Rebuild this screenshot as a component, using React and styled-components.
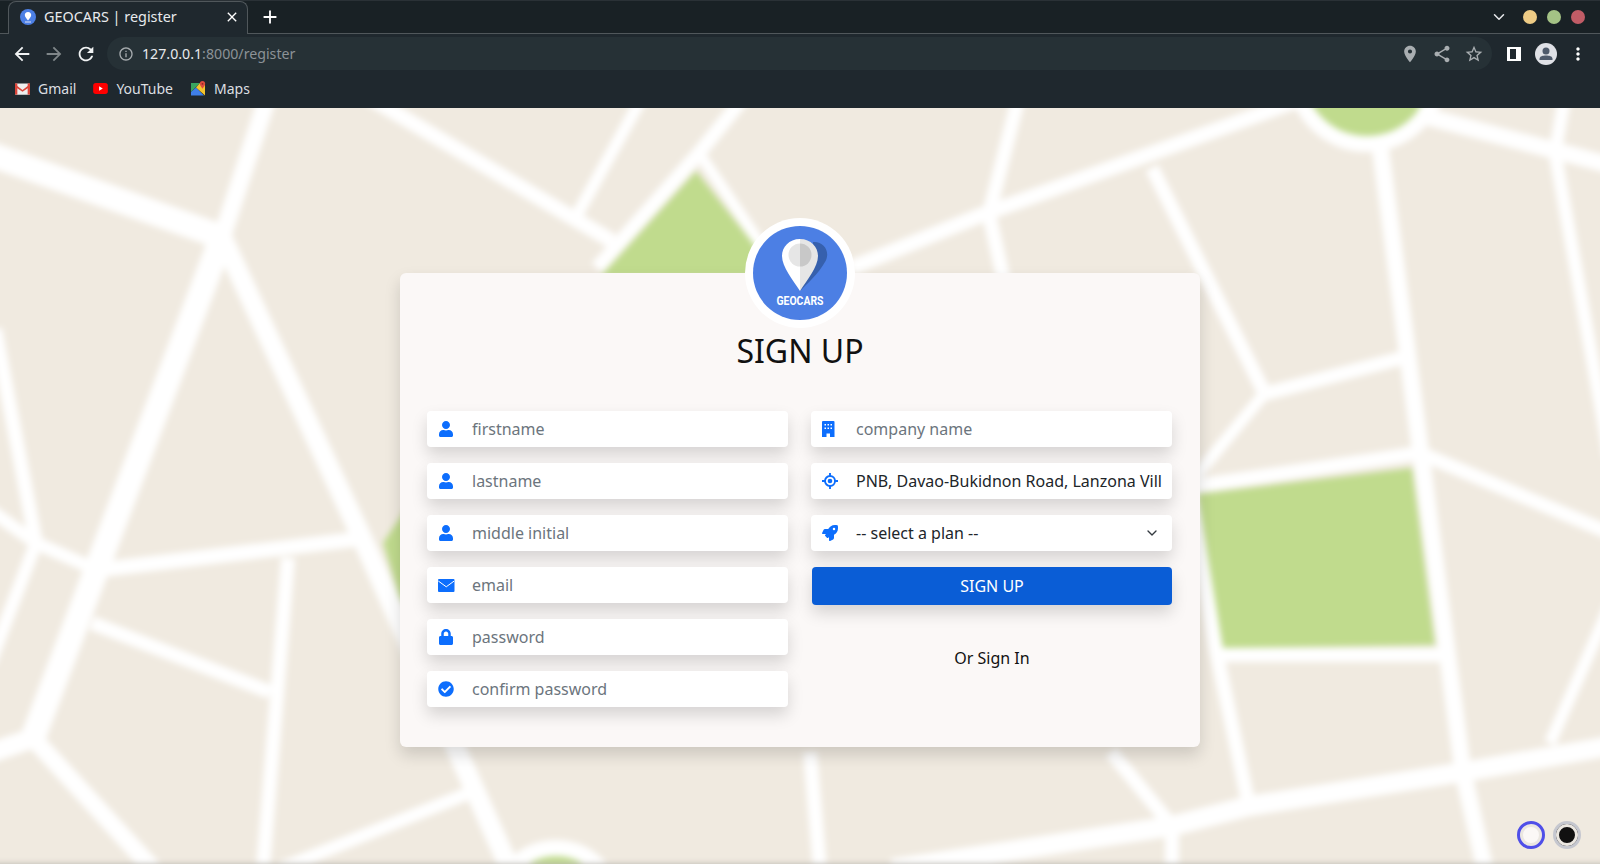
import React from 'react';
import styled, { createGlobalStyle } from 'styled-components';
import { FaUser, FaLock, FaCheckCircle, FaRocket } from 'react-icons/fa';
import {
  MdArrowBack,
  MdArrowForward,
  MdRefresh,
  MdPlace,
  MdShare,
  MdStarBorder,
  MdMoreVert,
  MdInfoOutline,
  MdClose,
  MdAdd,
} from 'react-icons/md';
import { FiChevronDown } from 'react-icons/fi';

const GlobalStyle = createGlobalStyle`
  html, body {
    margin: 0;
    padding: 0;
    height: 100%;
    overflow: hidden;
    font-family: "Noto Sans", "Open Sans", sans-serif;
  }
  * {
    box-sizing: border-box;
  }
`;

const Page = styled.div`
  width: 1600px;
  height: 864px;
  display: flex;
  flex-direction: column;
  overflow: hidden;
`;

/* browser chrome */
const Browser = styled.header`
  height: 108px;
  flex: none;
  background: #1f282e;
  color: #e8eaed;
  font-size: 14px;
`;

const TabStrip = styled.div`
  height: 34px;
  display: flex;
  align-items: flex-end;
  padding-left: 8px;
  background: #192125;
  border-top: 1px solid #2a3136;
  border-bottom: 1px solid #50575b;
`;

const Tab = styled.div`
  width: 240px;
  height: 33px;
  margin-bottom: -1px;
  display: flex;
  align-items: center;
  padding: 0 7px 2px 11px;
  background: #1f282e;
  border: 1px solid #50575b;
  border-bottom: none;
  border-radius: 8px 8px 0 0;
`;

const TabTitle = styled.span`
  flex: 1;
  margin: 0 0 2px 8px;
  font-size: 14.4px;
  white-space: nowrap;
`;

const TabAction = styled.span`
  display: flex;
  color: #fff;
  font-size: ${(p) => p.$size || 16}px;
`;

const NewTab = styled(TabAction)`
  margin: 0 0 1px 11px;
  align-self: center;
`;

const WindowControls = styled.div`
  margin-left: auto;
  align-self: center;
  display: flex;
  align-items: center;
  gap: 10px;
  padding-right: 15px;
`;

const Chevron = styled.span`
  display: flex;
  color: #e8eaed;
  font-size: 18px;
  margin-right: 5px;
`;

const Dot = styled.span`
  width: 14px;
  height: 14px;
  border-radius: 50%;
  background: ${(p) => p.$color};
`;

const Toolbar = styled.div`
  height: 37px;
  display: flex;
  align-items: center;
  padding: 2px 0 0 11px;
`;

const NavButton = styled.span`
  width: 22px;
  margin-right: 10px;
  display: flex;
  justify-content: center;
  font-size: 22px;
  color: ${(p) => (p.$off ? '#7f8689' : '#f1f3f4')};
`;

const Omnibox = styled.div`
  width: 1385px;
  height: 33px;
  display: flex;
  align-items: center;
  padding: 0 8px 0 11px;
  border-radius: 17px;
  background: #263136;
  font-size: 14.2px;
`;

const InfoIcon = styled.span`
  display: flex;
  font-size: 16px;
  color: #a7acaf;
  margin-right: 8px;
`;

const Host = styled.span`
  color: #e8eaed;
`;

const UrlRest = styled.span`
  color: #8c9296;
`;

const OmniActions = styled.div`
  margin-left: auto;
  display: flex;
  align-items: center;
  gap: 12px;
  color: #a9aeb1;
  font-size: 20px;

  svg {
    display: block;
  }
`;

const SideIcon = styled.span`
  width: 14px;
  height: 14px;
  margin-left: 15px;
  background: linear-gradient(90deg, #fff 0 3px, #1f282e 3px 9px, #fff 9px);
  border: 2px solid #fff;
  border-left-width: 0;
  border-right-width: 0;
  flex: none;
`;

const Avatar = styled.span`
  display: flex;
  margin-left: 14px;
`;

const Kebab = styled.span`
  display: flex;
  margin-left: 11px;
  font-size: 20px;
  color: #fff;
`;

const Bookmarks = styled.div`
  height: 37px;
  display: flex;
  align-items: center;
  padding: 0 0 2px 15px;
  color: #dcdfe1;
`;

const Bookmark = styled.span`
  display: flex;
  align-items: center;
  gap: 8px;
  margin-right: 17px;
`;

/* page with the map behind it */
const Main = styled.main`
  flex: 1;
  position: relative;
  overflow: hidden;
  display: flex;
  justify-content: center;
  padding-top: 165px;
  background: #b9b6b0;
`;

const MapLayer = styled.svg`
  position: absolute;
  left: -10px;
  top: -10px;
  width: 1620px;
  height: 766px;
  filter: blur(3px);
`;

const Card = styled.section`
  position: relative;
  width: 800px;
  height: 474px;
  padding: 0 27px;
  display: flex;
  flex-direction: column;
  align-items: center;
  background: #fbf8f7;
  border-radius: 6px;
  box-shadow: 0 8px 16px rgba(0, 0, 0, 0.15);
`;

const LogoWrap = styled.div`
  width: 110px;
  height: 110px;
  margin-top: -55px;
  flex: none;
  border-radius: 50%;
  background: #fff;
  padding: 8px;
`;

const Title = styled.h1`
  margin: -1px 0 36px;
  font-size: 32px;
  line-height: 48px;
  font-weight: 400;
  color: #111;
`;

const Columns = styled.div`
  width: 100%;
  display: grid;
  grid-template-columns: 361px 361px;
  column-gap: 23px;
`;

const Column = styled.div`
  display: flex;
  flex-direction: column;
  gap: 16px;
`;

const Field = styled.label`
  height: 36px;
  display: flex;
  align-items: center;
  background: #fff;
  border-radius: 4px;
  box-shadow: 0 8px 16px rgba(0, 0, 0, 0.15);
`;

const FieldIcon = styled.span`
  width: 45px;
  flex: none;
  display: flex;
  padding-left: 11px;
  font-size: 16px;
  color: #0d6efd;
`;

const TextInput = styled.input`
  flex: 1;
  min-width: 0;
  height: 100%;
  margin-right: 10px;
  padding: 0;
  border: none;
  outline: none;
  background: transparent;
  font: inherit;
  font-size: 16px;
  color: #212529;

  &::placeholder {
    color: #6c757d;
  }
`;

const PlanSelect = styled.select`
  flex: 1;
  height: 100%;
  padding: 0;
  border: none;
  outline: none;
  appearance: none;
  background: transparent;
  font: inherit;
  font-size: 16px;
  color: #212529;
`;

const SelectArrow = styled.span`
  display: flex;
  margin: 0 12px 0 -30px;
  font-size: 16px;
  color: #343a40;
  pointer-events: none;
`;

const SubmitButton = styled.button`
  height: 38px;
  margin-left: 1px;
  border: none;
  border-radius: 4px;
  background: #0a5dd6;
  color: #fff;
  font: inherit;
  font-size: 16px;
  box-shadow: 0 8px 16px rgba(0, 0, 0, 0.15);
`;

const SignInLink = styled.a`
  margin-top: 25px;
  padding-left: 1px;
  text-align: center;
  font-size: 16px;
  line-height: 24px;
  color: #111;
`;

const Swatches = styled.div`
  position: absolute;
  right: 19px;
  bottom: 15px;
  display: flex;
  gap: 8px;
`;

const Swatch = styled.span`
  width: 28px;
  height: 28px;
  border-radius: 50%;
  border: ${(p) => (p.$active ? '3px solid #4f4fe8' : '3px solid #c5c7cf')};
  box-shadow: inset 0 0 0 3px #ebe7e1;
  background: ${(p) => p.$color};
`;

const Roads = [
  // [points, width]
  ['-10,154 222,237', 25],
  ['222,237 268,96', 18],
  ['222,237 97,568 33,738', 25],
  ['222,237 362,538 510,869', 20],
  ['367,538 97,570', 15],
  ['-10,510 36,543 97,570', 13],
  ['-5,329 36,543', 14],
  ['36,543 -10,663', 13],
  ['92,623 270,692', 14],
  ['288,558 263,869', 14],
  ['33,738 -10,753', 20],
  ['33,738 153,869', 18],
  ['367,96 612,241', 15],
  ['643,96 577,215', 12],
  ['745,96 699,153 597,268', 14],
  ['699,153 770,258', 11],
  ['474,791 280,869', 13],
  ['851,268 984,214 1310,96', 15],
  ['1019,96 989,214 1004,281', 14],
  ['1152,168 1264,392', 14],
  ['1264,394 1402,358', 14],
  ['1264,394 1195,477', 12],
  ['1379,138 1463,772 1485,869', 17],
  ['1420,453 1195,486', 14],
  ['1420,453 1610,533', 14],
  ['1216,655 1443,655', 14],
  ['1188,480 1216,650 1249,806', 14],
  ['1610,746 1463,772 1249,806 1172,826 892,869', 20],
  ['1111,752 1172,826 1172,869', 14],
  ['810,752 820,869', 14],
  ['1610,606 1550,743', 12],
  ['1565,96 1555,153 1610,457', 13],
  ['1417,114 1610,165', 17],
];

const MapBackground = () => (
  <MapLayer viewBox="-10 98 1620 766">
    <rect x="-10" y="98" width="1620" height="766" fill="#f0eae0" />
    <polygon points="696,171 600,277 780,277 755,246" fill="#c0db8d" />
    <polygon points="383,543 412,500 430,625 400,598" fill="#c0db8d" />
    <polygon points="1190,495 1412,468 1435,645 1223,648" fill="#c0db8d" />
    <circle cx="556" cy="906" r="58" fill="#c0db8d" stroke="#fff" strokeWidth="16" />
    <circle cx="1367" cy="72" r="72" fill="#c0db8d" stroke="#fff" strokeWidth="16" />
    {Roads.map(([points, width]) => (
      <polyline
        key={points}
        points={points}
        fill="none"
        stroke="#fff"
        strokeWidth={width}
        strokeLinejoin="round"
      />
    ))}
  </MapLayer>
);

const LogoMark = () => (
  <svg viewBox="0 0 94 94" width="94" height="94">
    <circle cx="47" cy="47" r="47" fill="#4c7fe4" />
    <path d="M60 16 C71 15 78 26 72 36 C66 47 54 58 47 65 L60 30 Z" fill="#3660ad" />
    <path d="M47 13 C36 13 29 21 29 30 C29 41 40 54 47 65 Z" fill="#fff" />
    <path d="M47 13 C58 13 65 21 65 30 C65 41 54 54 47 65 Z" fill="#e6e6e6" />
    <path d="M47 17.500 A11.500 11.500 0 0 0 47 40.500 Z" fill="#e6e6e6" />
    <path d="M47 17.500 A11.500 11.500 0 0 1 47 40.500 Z" fill="#c8c8c8" />
    <text
      x="47"
      y="79"
      textAnchor="middle"
      textLength="47"
      lengthAdjust="spacingAndGlyphs"
      fontFamily="Roboto, sans-serif"
      fontWeight="700"
      fontSize="12"
      fill="#fff"
    >
      GEOCARS
    </text>
  </svg>
);

const Favicon = () => (
  <svg viewBox="0 0 16 16" width="16" height="16">
    <circle cx="8" cy="8" r="8" fill="#4c7fe4" />
    <path d="M8 3 C5.800 3 4.800 4.600 4.800 6 C4.800 7.800 6.800 10 8 11.500 C9.200 10 11.200 7.800 11.200 6 C11.200 4.600 10.200 3 8 3 Z" fill="#fff" />
    <rect x="5" y="12.500" width="6" height="1" fill="#dfe6f7" />
  </svg>
);

const GmailIcon = () => (
  <svg viewBox="0 0 16 12" width="15" height="12">
    <rect width="16" height="12" rx="1" fill="#eee" />
    <path d="M0 1 L8 7 L16 1 V3.500 L8 9 L0 3.500 Z" fill="#d9453a" />
    <rect width="2.500" height="12" fill="#d9453a" />
    <rect x="13.500" width="2.500" height="12" fill="#d9453a" />
  </svg>
);

const YoutubeIcon = () => (
  <svg viewBox="0 0 16 12" width="15" height="11">
    <rect width="16" height="12" rx="3" fill="#f00" />
    <path d="M6.500 3.500 L10.500 6 L6.500 8.500 Z" fill="#fff" />
  </svg>
);

const MapsIcon = () => (
  <svg viewBox="0 0 16 16" width="16" height="16">
    <path d="M1 2 H10 L1 11 Z" fill="#38a460" />
    <path d="M1 11 L6 6.500 L14 14.500 H1 Z" fill="#3f7fe8" />
    <path d="M6 6.500 L10 2 H15 V14.500 Z" fill="#f3c42e" />
    <path d="M12.500 0 C10.800 0 9.800 1.300 9.800 2.700 C9.800 4.300 11.500 6 12.500 7.800 C13.500 6 15.200 4.300 15.200 2.700 C15.200 1.300 14.200 0 12.500 0 Z" fill="#dd4b3e" />
    <circle cx="12.500" cy="2.800" r="0.900" fill="#8f2a22" />
  </svg>
);

const ProfileIcon = () => (
  <svg viewBox="0 0 22 22" width="22" height="22">
    <circle cx="11" cy="11" r="11" fill="#dfe1e6" />
    <circle cx="11" cy="8" r="3.500" fill="#4e5a6b" />
    <path d="M4.500 16 C4.500 13 8 12.500 11 12.500 C14 12.500 17.500 13 17.500 16 V17 H4.500 Z" fill="#4e5a6b" />
  </svg>
);

const EnvelopeIcon = () => (
  <svg viewBox="0 0 16.500 13" width="16.500" height="13">
    <rect width="16.500" height="13" rx="1" fill="currentColor" />
    <polyline points="0.300,2 8.250,7.800 16.200,2" fill="none" stroke="#fff" strokeWidth="1" />
  </svg>
);

const BuildingIcon = () => (
  <svg viewBox="0 0 12.500 16" width="12.500" height="16">
    <path d="M1 0 H11.500 A1 1 0 0 1 12.500 1 V16 H8 V12.500 H4.500 V16 H0 V1 A1 1 0 0 1 1 0 Z" fill="currentColor" />
    <path d="M2.500 3 H4 V4.500 H2.500 Z M5.500 3 H7 V4.500 H5.500 Z M8.500 3 H10 V4.500 H8.500 Z M2.500 6.500 H4 V8 H2.500 Z M5.500 6.500 H7 V8 H5.500 Z M8.500 6.500 H10 V8 H8.500 Z" fill="#fff" />
  </svg>
);

const LocationIcon = () => (
  <svg viewBox="0 0 16 16" width="16" height="16" fill="none" stroke="currentColor">
    <circle cx="8" cy="8" r="5" strokeWidth="1.900" />
    <circle cx="8" cy="8" r="2.300" fill="currentColor" stroke="none" />
    <path d="M8 0 V3 M8 13 V16 M0 8 H3 M13 8 H16" strokeWidth="1.900" />
  </svg>
);

const leftFields = [
  { icon: <FaUser />, placeholder: 'firstname' },
  { icon: <FaUser />, placeholder: 'lastname' },
  { icon: <FaUser />, placeholder: 'middle initial' },
  { icon: <EnvelopeIcon />, placeholder: 'email', type: 'email' },
  { icon: <FaLock />, placeholder: 'password', type: 'password' },
  { icon: <FaCheckCircle />, placeholder: 'confirm password', type: 'password' },
];

const App = () => {
  return (
    <Page>
      <GlobalStyle />
      <Browser>
        <TabStrip>
          <Tab>
            <Favicon />
            <TabTitle>GEOCARS | register</TabTitle>
            <TabAction><MdClose /></TabAction>
          </Tab>
          <NewTab $size={22}><MdAdd /></NewTab>
          <WindowControls>
            <Chevron><FiChevronDown /></Chevron>
            <Dot $color="#eecb85" />
            <Dot $color="#a4c285" />
            <Dot $color="#c15c66" />
          </WindowControls>
        </TabStrip>
        <Toolbar>
          <NavButton><MdArrowBack /></NavButton>
          <NavButton $off><MdArrowForward /></NavButton>
          <NavButton><MdRefresh /></NavButton>
          <Omnibox>
            <InfoIcon><MdInfoOutline /></InfoIcon>
            <Host>127.0.0.1</Host>
            <UrlRest>:8000/register</UrlRest>
            <OmniActions>
              <MdPlace />
              <MdShare />
              <MdStarBorder />
            </OmniActions>
          </Omnibox>
          <SideIcon />
          <Avatar><ProfileIcon /></Avatar>
          <Kebab><MdMoreVert /></Kebab>
        </Toolbar>
        <Bookmarks>
          <Bookmark><GmailIcon />Gmail</Bookmark>
          <Bookmark><YoutubeIcon />YouTube</Bookmark>
          <Bookmark><MapsIcon />Maps</Bookmark>
        </Bookmarks>
      </Browser>

      <Main>
        <MapBackground />
        <Card>
          <LogoWrap><LogoMark /></LogoWrap>
          <Title>SIGN UP</Title>
          <Columns>
            <Column>
              {leftFields.map((field) => (
                <Field key={field.placeholder}>
                  <FieldIcon>{field.icon}</FieldIcon>
                  <TextInput type={field.type || 'text'} placeholder={field.placeholder} />
                </Field>
              ))}
            </Column>
            <Column>
              <Field>
                <FieldIcon><BuildingIcon /></FieldIcon>
                <TextInput placeholder="company name" />
              </Field>
              <Field>
                <FieldIcon><LocationIcon /></FieldIcon>
                <TextInput defaultValue="PNB, Davao-Bukidnon Road, Lanzona Village, Matina" />
              </Field>
              <Field>
                <FieldIcon><FaRocket /></FieldIcon>
                <PlanSelect defaultValue="">
                  <option value="">-- select a plan --</option>
                </PlanSelect>
                <SelectArrow><FiChevronDown /></SelectArrow>
              </Field>
              <SubmitButton>SIGN UP</SubmitButton>
              <SignInLink>Or Sign In</SignInLink>
            </Column>
          </Columns>
        </Card>
        <Swatches>
          <Swatch $active $color="#fbf8f6" />
          <Swatch $color="#111" />
        </Swatches>
      </Main>
    </Page>
  );
};

export default App;
